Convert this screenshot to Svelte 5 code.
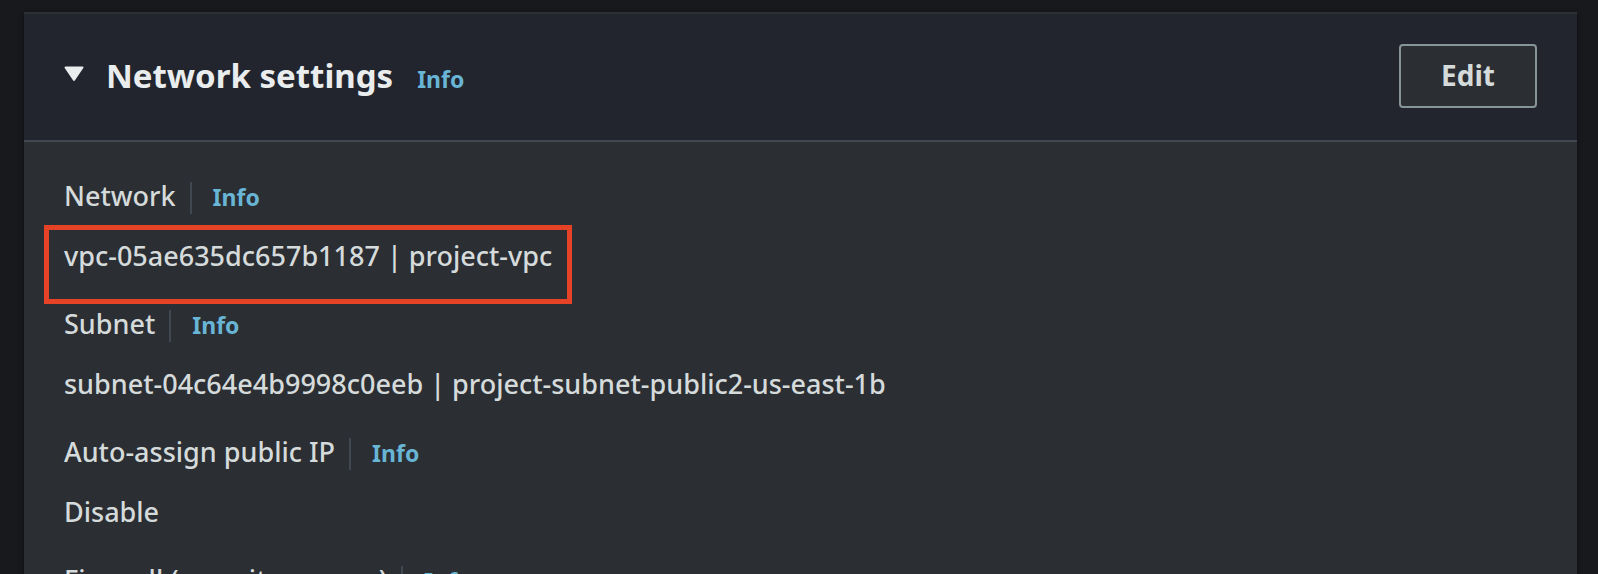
<script>
  const fields = [
    { label: 'Network', value: 'vpc-05ae635dc657b1187 | project-vpc', marked: true },
    { label: 'Subnet', value: 'subnet-04c64e4b9998c0eeb | project-subnet-public2-us-east-1b' },
    { label: 'Auto-assign public IP', value: 'Disable' },
    { label: 'Firewall (security groups)', value: '' }
  ];
  let open = $state(true);
</script>

<main>
  <section>
    <header>
      <button class="toggle" aria-label="Toggle network settings" aria-expanded={open} onclick={() => (open = !open)}>
        <svg class:closed={!open} width="20" height="16" viewBox="0 0 20 16"><path d="M1.5 1.5H18.5L10 14Z" fill="#eaeded" stroke="#eaeded" stroke-width="2" stroke-linejoin="round" /></svg>
      </button>
      <div class="title">
        <h2>Network settings</h2>
        <a href="#info">Info</a>
      </div>
      <button class="edit">Edit</button>
    </header>
    {#if open}
      <dl>
        {#each fields as f}
          <div class="field">
            <dt><span class="label">{f.label}</span><a href="#info">Info</a></dt>
            <dd><span class:marked={f.marked}>{f.value}</span></dd>
          </div>
        {/each}
      </dl>
    {/if}
  </section>
</main>

<style>
  :global(body) { margin: 0; overflow: hidden; background: #18191d; }
  main { height: 100vh; overflow: hidden; box-sizing: border-box; padding: 12px 21px 0 24px; font-family: "Noto Sans", sans-serif; color: #d5dbdb; }
  section { background: #2b2e33; min-height: 100vh; border-top: 2px solid #2d3034; box-shadow: 0 2px 4px #0008; }
  header { display: flex; align-items: center; background: #22252d; padding: 30px 40px 32px; border-bottom: 2px solid #414750; }
  .toggle { background: none; border: 0; padding: 0 0 4px; width: 42px; text-align: left; font-size: 0; }
  .closed { transform: rotate(-90deg); }
  .title { display: flex; align-items: baseline; gap: 24px; }
  h2 { margin: 0; font-size: 33px; line-height: 44px; color: #eaeded; }
  a { color: #68b5d5; font-size: 23px; line-height: 28px; font-weight: 700; text-decoration: none; }
  .edit { margin-left: auto; padding: 0 40px 2px; height: 64px; border: 2px solid #879596; border-radius: 4px; background: #2b2e33; color: #d5dbdb; font: 700 28px "Noto Sans", sans-serif; }
  dl { margin: 0; padding: 40px; }
  .field { height: 128px; }
  dt { display: flex; align-items: baseline; height: 32px; font-size: 27px; font-weight: 500; white-space: nowrap; }
  .label { padding: 0 14px 4px 0; margin-right: 21px; border-right: 2px solid #414750; line-height: 28px; }
  dd { margin: 20px 0 0; font-size: 27px; font-weight: 500; line-height: 44px; }
  .marked { display: inline-block; position: relative; }
  .marked::after { content: ""; position: absolute; inset: -9px -20px -26px -20px; border: 5px solid #e64226; }
</style>
